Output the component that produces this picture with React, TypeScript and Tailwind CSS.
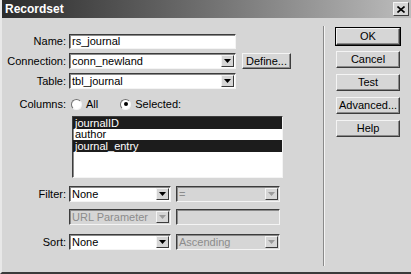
import React from 'react';

const font = { fontFamily: '"Liberation Sans", Arial, sans-serif' };

const Sunken: React.FC<{ className?: string; disabled?: boolean; children?: React.ReactNode }> = ({ className = '', disabled, children }) => (
  <div
    className={`flex items-center border border-t-[#3c3c3c] border-l-[#3c3c3c] border-r-[#f4f4f4] border-b-[#f4f4f4] shadow-[inset_1px_1px_0_#8a8a8a] ${disabled ? 'bg-[#d6d6d6] text-[#8c8c8c]' : 'bg-white text-black'} ${className}`}
  >
    {children}
  </div>
);

const Arrow: React.FC<{ disabled?: boolean }> = ({ disabled }) => (
  <div className="ml-auto mr-[1px] flex h-[12px] w-[13px] items-center justify-center border border-t-[#f4f4f4] border-l-[#f4f4f4] border-r-[#3c3c3c] border-b-[#3c3c3c] bg-[#d6d6d6]">
    <svg width="7" height="4" viewBox="0 0 7 4">
      <path d="M0 0h7L3.5 4z" fill={disabled ? '#9a9a9a' : '#000'} />
    </svg>
  </div>
);

const Select: React.FC<{ value: string; className?: string; disabled?: boolean }> = ({ value, className = '', disabled }) => (
  <Sunken className={`h-[16px] ${className}`} disabled={disabled}>
    <span className="pl-[2px] leading-none">{value}</span>
    <Arrow disabled={disabled} />
  </Sunken>
);

const Label: React.FC<{ children: React.ReactNode }> = ({ children }) => (
  <div className="w-[67px] shrink-0 pr-[3px] text-right">{children}</div>
);

const Btn: React.FC<{ children: React.ReactNode; def?: boolean }> = ({ children, def }) => (
  <div className={def ? 'border border-black' : 'border border-transparent'}>
    <div className="flex h-[17px] items-center justify-center border border-t-[#f4f4f4] border-l-[#f4f4f4] border-r-[#3c3c3c] border-b-[#3c3c3c] shadow-[inset_-1px_-1px_0_#8a8a8a] bg-[#d6d6d6]">
      {children}
    </div>
  </div>
);

const Radio: React.FC<{ checked?: boolean }> = ({ checked }) => (
  <div className="flex h-[11px] w-[11px] items-center justify-center rounded-full border border-t-[#707070] border-l-[#707070] border-r-[#f4f4f4] border-b-[#f4f4f4] bg-white">
    {checked && <div className="h-[4px] w-[4px] rounded-full bg-black" />}
  </div>
);

export default function App() {
  return (
    <div className="h-[274px] w-[411px] overflow-hidden bg-[#d6d6d6] text-[11px] text-black" style={font}>
      <div className="flex h-[274px] flex-col border-l-2 border-l-[#e8e8e8] border-b-2 border-b-[#3a3a3a]">
        <div className="flex h-[18px] items-center bg-gradient-to-r from-[#2c2c2c] via-[#707070] to-[#bdbdbd] pl-[3px] pr-[2px]">
          <span className="text-[12px] font-bold text-white">Recordset</span>
          <div className="ml-auto flex h-[14px] w-[16px] items-center justify-center border border-t-[#f4f4f4] border-l-[#f4f4f4] border-r-[#3c3c3c] border-b-[#3c3c3c] bg-[#d6d6d6]">
            <svg width="8" height="7" viewBox="0 0 8 7">
              <path d="M0.5 0.5l7 6M7.5 0.5l-7 6" stroke="#000" strokeWidth="1.6" />
            </svg>
          </div>
        </div>

        <div className="flex flex-1">
          <div className="w-[320px] pt-[16px]">
            <div className="flex h-[15px] items-center">
              <Label>Name:</Label>
              <Sunken className="h-[15px] w-[167px]"><span className="pl-[2px]">rs_journal</span></Sunken>
            </div>
            <div className="mt-[4px] flex h-[16px] items-center">
              <Label>Connection:</Label>
              <Select value="conn_newland" className="w-[167px]" />
              <div className="ml-[6px] flex h-[16px] w-[49px] items-center justify-center border border-t-[#f4f4f4] border-l-[#f4f4f4] border-r-[#3c3c3c] border-b-[#3c3c3c] shadow-[inset_-1px_-1px_0_#8a8a8a]">
                Define...
              </div>
            </div>
            <div className="mt-[4px] flex h-[16px] items-center">
              <Label>Table:</Label>
              <Select value="tbl_journal" className="w-[167px]" />
            </div>
            <div className="mt-[8px] flex h-[14px] items-center">
              <Label>Columns:</Label>
              <div className="ml-[2px] flex items-center gap-[4px]">
                <Radio />
                <span>All</span>
              </div>
              <div className="ml-[22px] flex items-center gap-[4px]">
                <Radio checked />
                <span>Selected:</span>
              </div>
            </div>
            <div className="mt-[5px] flex">
              <div className="w-[70px] shrink-0" />
              <Sunken className="h-[62px] w-[211px] flex-col !items-stretch">
                <div className="h-[12px] bg-[#1c1c1c] pl-[2px] leading-[12px] text-white">journalID</div>
                <div className="h-[11px] pl-[2px] leading-[11px]">author</div>
                <div className="h-[12px] bg-[#1c1c1c] pl-[2px] leading-[12px] text-white">journal_entry</div>
              </Sunken>
            </div>
            <div className="mt-[8px] flex h-[16px] items-center">
              <Label>Filter:</Label>
              <Select value="None" className="w-[102px]" />
              <Select value="=" className="ml-[5px] w-[104px]" disabled />
            </div>
            <div className="mt-[7px] flex h-[16px] items-center">
              <Label>&nbsp;</Label>
              <Select value="URL Parameter" className="w-[102px]" disabled />
              <Sunken className="ml-[5px] h-[16px] w-[104px]" disabled />
            </div>
            <div className="mt-[9px] flex h-[16px] items-center">
              <Label>Sort:</Label>
              <Select value="None" className="w-[102px]" />
              <Select value="Ascending" className="ml-[5px] w-[104px]" disabled />
            </div>
          </div>

          <div className="mb-[6px] ml-[1px] mt-[8px] w-[2px] border-l border-l-[#8a8a8a] border-r border-r-[#f4f4f4]" />

          <div className="ml-[10px] flex w-[66px] flex-col gap-[4px] pt-[9px]">
            <Btn def>OK</Btn>
            <Btn>Cancel</Btn>
            <Btn>Test</Btn>
            <Btn>Advanced...</Btn>
            <Btn>Help</Btn>
          </div>
        </div>
      </div>
    </div>
  );
}
